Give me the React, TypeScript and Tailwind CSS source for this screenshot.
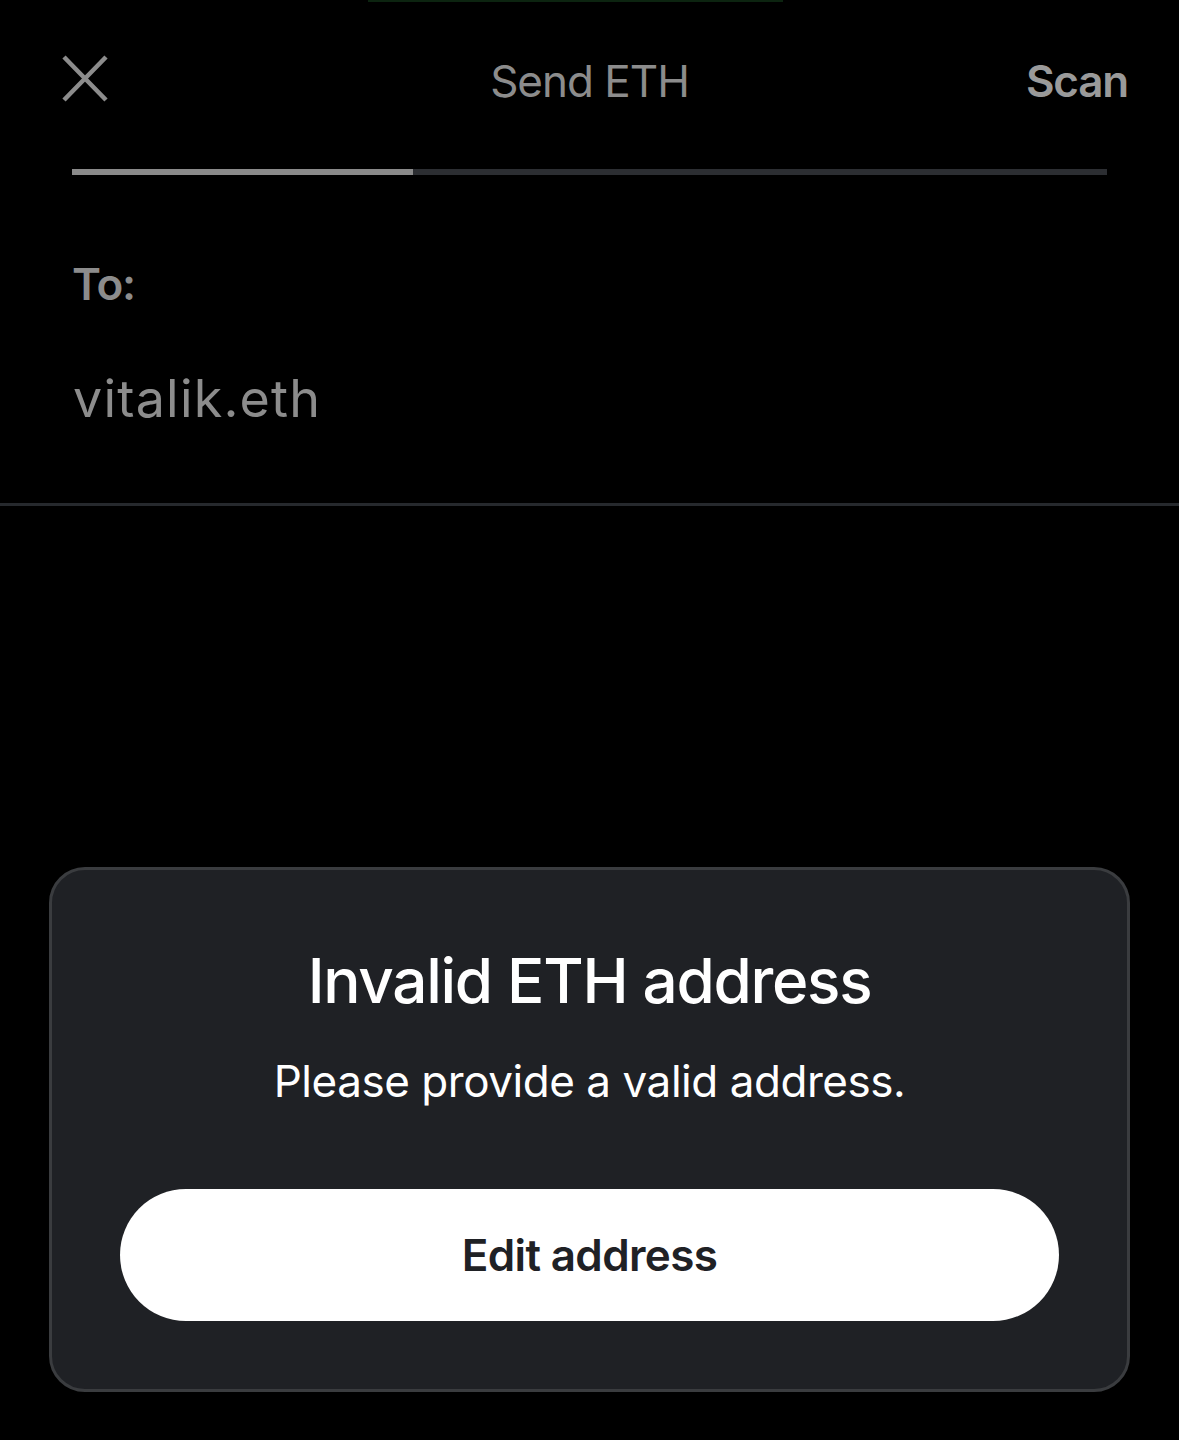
export default function App() {
  return (
    <div
      className="w-full h-[1440px] bg-black overflow-hidden flex flex-col"
      style={{ fontFamily: 'Inter, "Noto Sans", sans-serif' }}
    >
      {/* status strip */}
      <div className="h-[2px] ml-[368px] w-[415px] bg-[#0c2410]" />

      {/* header */}
      <div className="h-[158px] px-[51px] grid grid-cols-[1fr_auto_1fr] items-center">
        <button className="justify-self-start ml-[11px] mb-[5px] text-[#8c8c8c]" aria-label="Close">
          <svg width="46" height="47" viewBox="0 0 46 47" fill="none" stroke="currentColor" strokeWidth="4.5">
            <path d="M2 2 L44 45 M44 2 L2 45" />
          </svg>
        </button>
        <div className="text-[44px] leading-none tracking-[-1px] text-[#8c8c8c]">Send ETH</div>
        <button className="justify-self-end text-[44px] leading-none font-semibold tracking-[-1.2px] text-[#9a9a9a]">
          Scan
        </button>
      </div>

      {/* progress */}
      <div className="mt-[9px] mx-[72px] h-[6px] bg-[#2c2e32] flex">
        <div className="w-[341px] h-full bg-[#8a8a8a]" />
      </div>

      {/* recipient */}
      <div className="mt-[87px] px-[72px] text-[44px] leading-none font-semibold tracking-[-1.2px] text-[#8c8c8c]">
        To:
      </div>
      <div className="mt-[67px] px-[73px] text-[52px] leading-none tracking-[1.2px] text-[#8c8c8c]">vitalik.eth</div>
      <div className="mt-[78px] h-[3px] bg-[#26292d]" />

      {/* error sheet */}
      <div className="mt-[361px] mx-[49px] rounded-[36px] border-[3px] border-[#3a3c3f] bg-[#1f2125] pt-[80px] pb-[68px] px-[68px] flex flex-col items-center">
        <h2 className="text-[62px] leading-none font-medium tracking-[-1.3px] text-white">Invalid ETH address</h2>
        <p className="mt-[47px] text-[44px] leading-none tracking-[-0.45px] text-white">Please provide a valid address.</p>
        <button className="mt-[86px] w-full h-[132px] rounded-full bg-white text-[44px] leading-none font-semibold tracking-[-0.65px] text-[#1f2125]">
          Edit address
        </button>
      </div>
    </div>
  );
}
